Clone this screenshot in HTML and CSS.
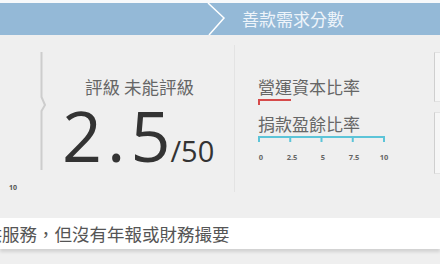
FILE: index.html
```html
<!DOCTYPE html>
<html lang="zh-Hant">

<head>
    <meta charset="UTF-8">
    <title>善款需求分數</title>
    <link rel="stylesheet" href="styles.css">
</head>

<body>
    <div class="topline"></div>
    <div class="header">
        <svg class="chev" width="24" height="32" viewBox="0 0 24 32">
            <polyline points="2,0 18,15 3,32" fill="none" stroke="#ffffff" stroke-width="1.5" />
        </svg>
        <span class="title">善款需求分數</span>
    </div>

    <div class="main">
        <div class="stub"><span class="tick">10</span></div>

        <svg class="divider" width="10" height="181" viewBox="0 0 10 181">
            <polyline points="1.5,17 1.5,62 5,70 1.5,76 1.5,135" fill="none" stroke="#cdcdcd" stroke-width="2" />
        </svg>

        <div class="rating">
            <div class="grade">評級 未能評級</div>
            <div class="score"><span class="spaced">2.</span>5<span class="outof">/50</span></div>
        </div>

        <div class="ratios">
            <div class="label">營運資本比率</div>
            <svg class="bar" width="140" height="15" viewBox="0 0 140 15">
                <line x1="1" y1="2" x2="33" y2="2" stroke="#d64a4a" stroke-width="2" />
                <line x1="1" y1="1" x2="1" y2="7" stroke="#d64a4a" stroke-width="2" />
            </svg>
            <div class="label">捐款盈餘比率</div>
            <svg class="axis" width="140" height="30" viewBox="0 0 140 30">
                <line x1="1" y1="2" x2="126" y2="2" stroke="#5cc4d8" stroke-width="2" />
                <line x1="1" y1="1" x2="1" y2="7" stroke="#5cc4d8" stroke-width="2" />
                <line x1="32.25" y1="1" x2="32.25" y2="7" stroke="#5cc4d8" stroke-width="2" />
                <line x1="63.5" y1="1" x2="63.5" y2="7" stroke="#5cc4d8" stroke-width="2" />
                <line x1="94.75" y1="1" x2="94.75" y2="7" stroke="#5cc4d8" stroke-width="2" />
                <line x1="126" y1="1" x2="126" y2="7" stroke="#5cc4d8" stroke-width="2" />
                <text x="3" y="25" text-anchor="middle">0</text>
                <text x="34" y="25" text-anchor="middle">2.5</text>
                <text x="65" y="25" text-anchor="middle">5</text>
                <text x="96" y="25" text-anchor="middle">7.5</text>
                <text x="126" y="25" text-anchor="middle">10</text>
            </svg>
        </div>

        <div class="edge">
            <div class="card"></div>
            <div class="card tall"></div>
        </div>
    </div>

    <div class="note">提供服務，但沒有年報或財務撮要</div>
</body>

</html>
```

FILE: styles.css
```css
html,
body {
    height: 100%;
}

body {
    margin: 0;
    background: #efefef;
    font-family: "Noto Sans CJK TC", "Noto Sans", sans-serif;
    overflow: hidden;
}

.topline {
    height: 3px;
    background: #f7f9fb;
}

.header {
    height: 32px;
    background: #94b9d7;
    display: flex;
    align-items: center;
}

.chev {
    margin-left: 206px;
    display: block;
}

.title {
    margin-left: 12px;
    color: #eef4fa;
    font-size: 17px;
    line-height: 32px;
}

.main {
    height: 181px;
    display: flex;
}

.stub {
    width: 40px;
    display: flex;
    align-items: flex-end;
    padding-bottom: 24px;
    box-sizing: border-box;
}

.tick {
    margin-left: 9px;
    font-family: "Open Sans", sans-serif;
    font-size: 7px;
    font-weight: bold;
    color: #555;
}

.divider {
    display: block;
    flex: none;
}

.rating {
    width: 184px;
    padding-top: 40px;
    box-sizing: border-box;
}

.grade {
    padding-left: 35px;
    font-size: 17.5px;
    line-height: 24px;
    color: #666;
}

.score {
    padding-left: 12px;
    font-family: "Open Sans", sans-serif;
    font-size: 70px;
    line-height: 72px;
    color: #333;
    white-space: nowrap;
}

.spaced {
    letter-spacing: 5px;
}

.outof {
    font-size: 29px;
}

.ratios {
    margin: 10px 0 24px;
    padding: 31px 0 0 23px;
    border-left: 1px solid #e3e3e3;
    width: 176px;
}

.label {
    font-size: 17px;
    line-height: 22px;
    color: #666;
    white-space: nowrap;
}

.bar,
.axis {
    display: block;
}

.axis text {
    font-family: "Open Sans", sans-serif;
    font-size: 7.5px;
    font-weight: bold;
    fill: #666;
}

.edge {
    margin-left: auto;
    width: 6px;
    padding-top: 17px;
}

.card {
    height: 48px;
    border-left: 1px solid #cfcfcf;
    border-top: 1px solid #e2e2e2;
    border-bottom: 1px solid #e2e2e2;
    background: #f6f6f6;
}

.card.tall {
    margin-top: 10px;
    height: 60px;
}

.note {
    height: 31px;
    margin-top: 2px;
    background: #fff;
    box-shadow: 0 3px 3px rgba(0, 0, 0, 0.12);
    font-size: 17.5px;
    line-height: 31px;
    color: #555;
    text-indent: -33px;
    white-space: nowrap;
}
```
